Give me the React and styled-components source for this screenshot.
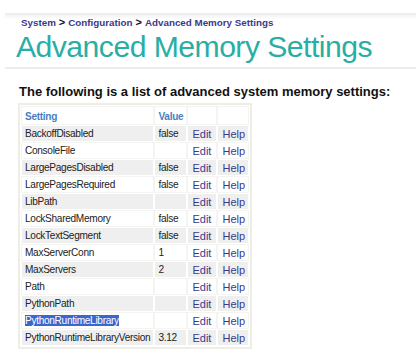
import React from "react"
import styled, { createGlobalStyle } from 'styled-components'

const Global = createGlobalStyle`
    body {
        margin:0;
        background:#fff;
        font-family:"Liberation Sans", Arial, sans-serif;
    }
`

const Page = styled.div`
    padding-top:13px;
`

const Header = styled.div`
    margin-left:5px;
    padding:3px 0 3px 16px;
    background:linear-gradient(#ececec 0, #fff 6px);
    border-bottom:2px solid #ececec;
`

const Crumbs = styled.div`
    font-size:9.8px;
    font-weight:bold;
    color:#3a3a8c;
    line-height:13px;
`

const Sep = styled.span`
    color:#111;
    font-size:11px;
    margin:0 3px;
`

const Title = styled.div`
    font-size:30.2px;
    letter-spacing:-0.55px;
    color:#29aea5;
    margin-left:-5px;
    line-height:35px;
`

const Intro = styled.div`
    font-size:13px;
    font-weight:bold;
    color:#111;
    white-space:nowrap;
    margin:15px 0 0 19px;
`

const Table = styled.table`
    margin:4px 0 0 18px;
    border:2px solid #eeede6;
    border-spacing:2px;
    font-size:10.1px;
    letter-spacing:-0.3px;
`

const Head = styled.th`
    text-align:left;
    color:#4a7fc1;
    font-weight:bold;
    padding:2px 3px 1px;
    height:14px;
    width:${p => p.$w}px;
    background:#fff;
    box-shadow:0 0 0 1px #f4f4f0;
`

const Cell = styled.td`
    padding:1px 3px;
    height:13px;
    white-space:nowrap;
    color:${p => p.$link ? '#3a3a8c' : '#222'};
    background:${p => p.$shade ? '#efefef' : '#fff'};
    box-shadow:${p => p.$shade ? 'none' : '0 0 0 1px #f4f4f0'};
    ${p => p.$link && `
        font-size:11px;
        letter-spacing:0;
        padding-left:4px;
    `}
`

const Picked = styled.span`
    background:#3966cf;
    color:#fff;
`

const rows = [
    ["BackoffDisabled", "false"],
    ["ConsoleFile", ""],
    ["LargePagesDisabled", "false"],
    ["LargePagesRequired", "false"],
    ["LibPath", ""],
    ["LockSharedMemory", "false"],
    ["LockTextSegment", "false"],
    ["MaxServerConn", "1"],
    ["MaxServers", "2"],
    ["Path", ""],
    ["PythonPath", ""],
    ["PythonRuntimeLibrary", ""],
    ["PythonRuntimeLibraryVersion", "3.12"],
]

const App = () => (
    <Page>
        <Global />
        <Header>
            <Crumbs>
                System<Sep>&gt;</Sep>Configuration<Sep>&gt;</Sep>Advanced Memory Settings
            </Crumbs>
            <Title>Advanced Memory Settings</Title>
        </Header>

        <Intro>The following is a list of advanced system memory settings:</Intro>

        <Table>
            <thead>
                <tr>
                    <Head $w={125}>Setting</Head>
                    <Head $w={25}>Value</Head>
                    <Head $w={22}></Head>
                    <Head $w={22}></Head>
                </tr>
            </thead>
            <tbody>
                {rows.map(([name, value], i) => (
                    <tr key={name}>
                        <Cell $shade={i % 2 === 0}>
                            {name === "PythonRuntimeLibrary" ? <Picked>{name}</Picked> : name}
                        </Cell>
                        <Cell $shade={i % 2 === 0}>{value}</Cell>
                        <Cell $shade={i % 2 === 0} $link>Edit</Cell>
                        <Cell $shade={i % 2 === 0} $link>Help</Cell>
                    </tr>
                ))}
            </tbody>
        </Table>
    </Page>
)

export default App
